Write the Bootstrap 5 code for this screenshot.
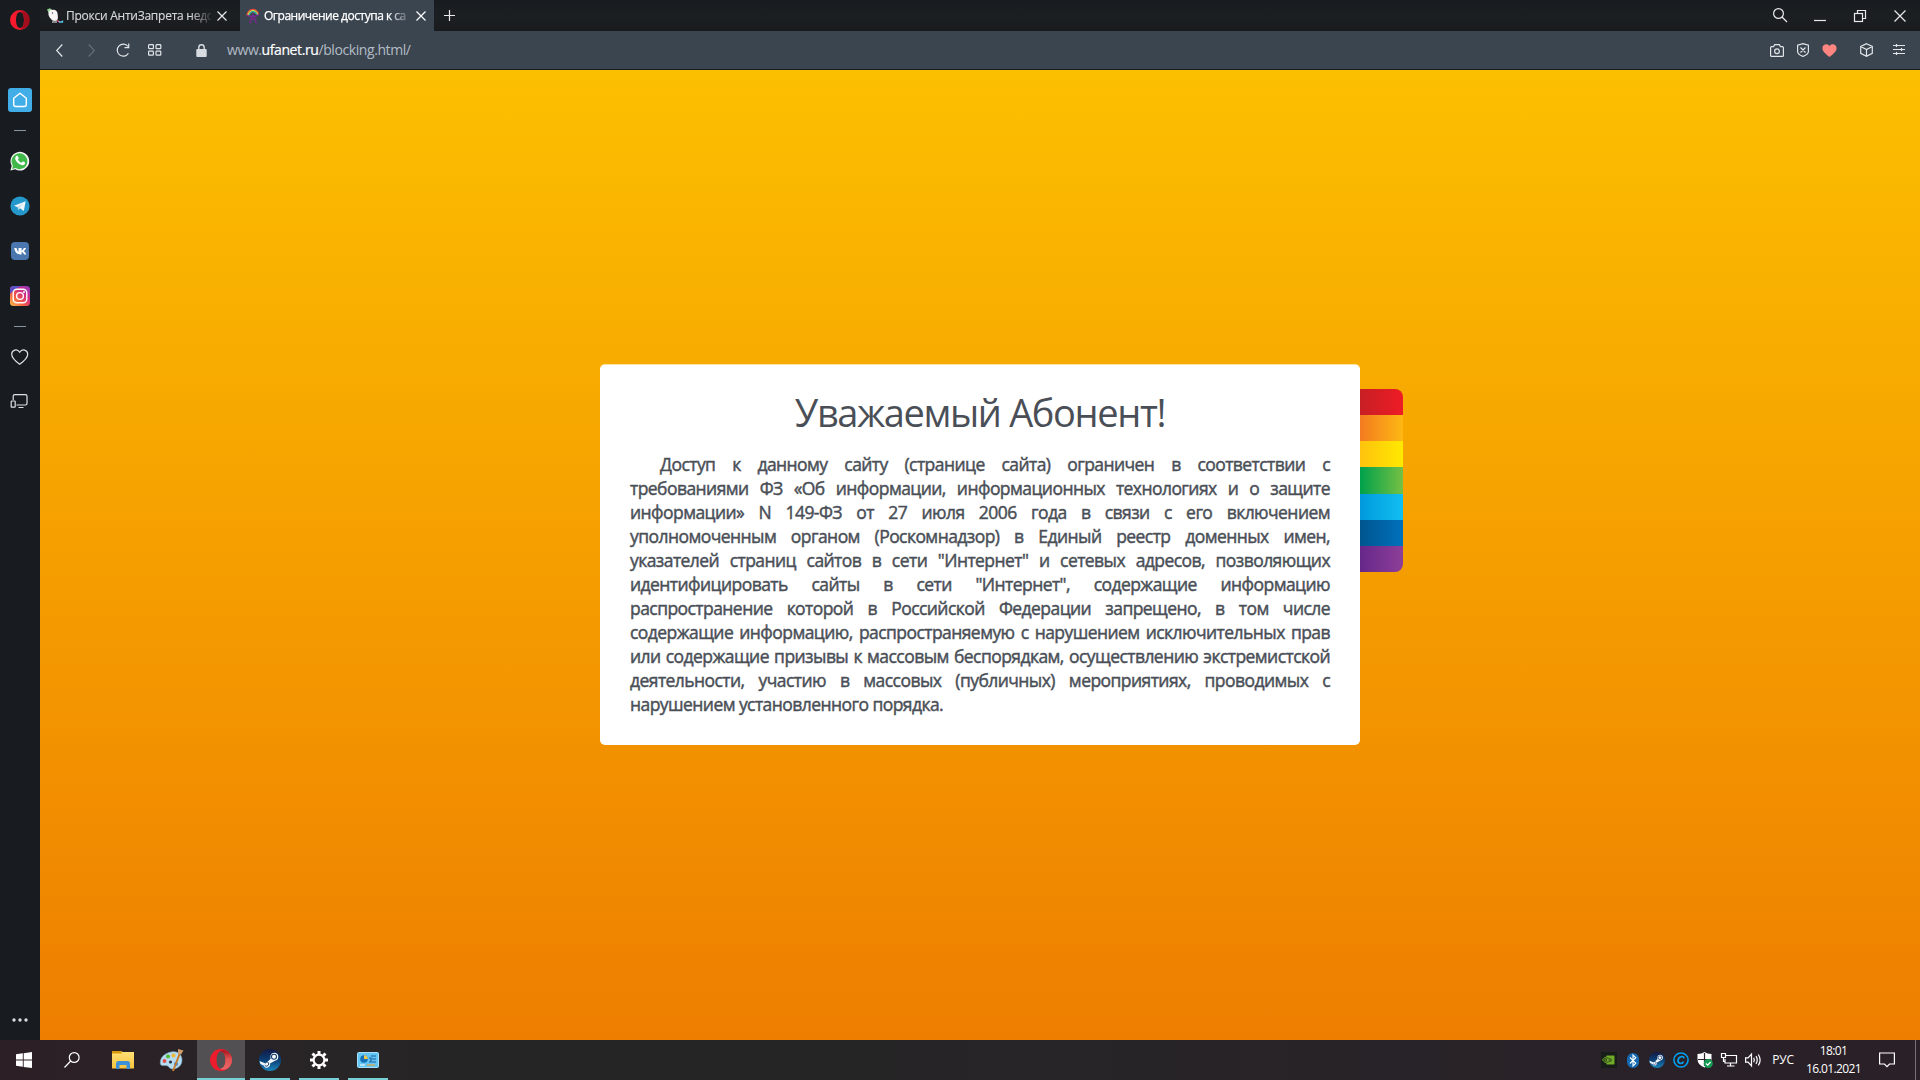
<!DOCTYPE html>
<html lang="ru">
<head>
<meta charset="utf-8">
<title>Ограничение доступа к сайту</title>
<link href="https://cdn.jsdelivr.net/npm/bootstrap@5.3.0/dist/css/bootstrap.min.css" rel="stylesheet">
<style>
body{width:1920px;height:1080px;font-family:"Open Sans","Noto Sans",sans-serif;background:#181c20}
svg{display:block;flex:none;overflow:visible}
.ln{fill:none;stroke:currentColor;stroke-width:1.2}
.rail{width:40px;background:#181c20;color:#dfe3e6}
.rail>div,.slot{display:flex;align-items:center;justify-content:center;flex:none}
.h44{height:44px}.h46{height:46px}.h42{height:42px}.h17{height:17px}.h15{height:15px}.h40{height:40px}
.home-spot{margin-top:38px}
.dash{width:12px;height:1px;background:#8795a3}
.tabs{height:31px;background:linear-gradient(#181c20,#1c1f22 60%,#181a1c);color:#e8eaec;font-size:12px}
.tab-a{width:200px;padding-left:7px}
.tab-b{width:194px;padding-left:6px;background:#3b4550;color:#fff}
.cap{width:145px;line-height:28px;height:28px;white-space:nowrap;-webkit-mask-image:linear-gradient(90deg,#000 86%,transparent 102%);mask-image:linear-gradient(90deg,#000 86%,transparent 102%)}
.cap-a{margin-left:3px;letter-spacing:-.25px;color:#d4d7d9;-webkit-text-stroke:.15px}
.cap-b{margin-left:3px;letter-spacing:-.48px;-webkit-text-stroke:.25px}
.x-a{margin-left:6px}.x-b{margin-left:7px}
.w31{width:31px}.w38{width:38px}.w40{width:40px}.w24{width:24px}.w26{width:26px}.w48{width:48px}
.bar{height:39px;background:#3b4550;border-bottom:1px solid #181c20;color:#e1e5e8}
.url{font-size:14px;color:#b3bcc5;letter-spacing:-.41px;line-height:38px}
.url b{color:#fff;font-weight:400;-webkit-text-stroke:.2px}
.tune{padding-left:3px;margin-right:15px}
.sky{height:970px;background:linear-gradient(#fcbf00,#ee7e00);padding-top:294px}
.notice{width:760px;height:381px;border-radius:5px;padding:22px 30px 0;color:#4a4f57;background:#fff;margin-left:560px;border-top:1px solid #fde3a2}
.notice h1{font-size:38px;line-height:50px;height:65px;margin:0;font-weight:400;letter-spacing:-1.35px;white-space:nowrap}
.txt{font-size:17.5px;line-height:24px;letter-spacing:-.56px;-webkit-text-stroke:.45px}
.txt span{display:block;text-align:justify;text-align-last:justify;white-space:nowrap}
.txt span:first-child{padding-left:30px}
.txt span:last-child{text-align-last:left}
.rainbow{width:43px;height:183px;margin-top:25px;border-radius:0 8px 8px 0;overflow:hidden}
.rainbow i{flex:1}
.r1{background:linear-gradient(90deg,#c71f24,#ee1c25)}.r2{background:linear-gradient(90deg,#f47b20,#fdb813)}.r3{background:linear-gradient(90deg,#ffc20e,#ffe900)}.r4{background:linear-gradient(90deg,#00a14b,#75c044)}.r5{background:linear-gradient(90deg,#0099dc,#11bff2)}.r6{background:linear-gradient(90deg,#00558f,#0071bc)}.r7{background:linear-gradient(90deg,#66278a,#8d3f98)}
.task{height:40px;background:linear-gradient(90deg,#2c1f25,#282527 16%,#252525 28%,#272527 55%,#2a2028);color:#fff}
.apps{gap:1px;margin-left:3px}
.app{width:48px;height:40px}
.app.open{background:linear-gradient(#76d0d6,#76d0d6) 50% 100%/40px 2px no-repeat}
.app.now{background:linear-gradient(#76d0d6,#76d0d6) 50% 100%/48px 2px no-repeat,#535053}
.lang{width:36px;font-size:12px;letter-spacing:-.2px}
.clock{width:65px;font-size:12px;line-height:18px;letter-spacing:-.6px;text-align:center;padding-top:2px}
.w42{width:42px}
.edge{width:5px;margin-left:7px;border-left:1px solid #77717a}
</style>
<script src="https://cdn.jsdelivr.net/npm/bootstrap@5.3.0/dist/js/bootstrap.bundle.min.js"></script>
</head>
<body class="m-0 overflow-hidden d-flex flex-column">
<svg width="0" height="0" class="position-absolute">
<defs>
<linearGradient id="gi" x1="0" y1="1" x2="1" y2="0"><stop offset="0" stop-color="#fdc04f"/><stop offset=".35" stop-color="#f56040"/><stop offset=".65" stop-color="#d12d84"/><stop offset="1" stop-color="#8b3bc0"/></linearGradient>
<linearGradient id="gs" x1="0" y1="0" x2="0" y2="1"><stop offset="0" stop-color="#131a44"/><stop offset=".5" stop-color="#0b3f75"/><stop offset="1" stop-color="#1b86bd"/></linearGradient>
<linearGradient id="gr" x1="0" y1="0" x2="1" y2="0"><stop offset="0" stop-color="#ff1b2d"/><stop offset=".6" stop-color="#e3192b"/><stop offset="1" stop-color="#8d0c19"/></linearGradient>
<linearGradient id="gt" x1="0" y1="0" x2="0" y2="1"><stop offset="0" stop-color="#a3141c"/><stop offset=".45" stop-color="#e05353"/><stop offset="1" stop-color="#e8686a"/></linearGradient>
<linearGradient id="gf" x1="0" y1="0" x2="0" y2="1"><stop offset="0" stop-color="#ffe27a"/><stop offset="1" stop-color="#f8c33c"/></linearGradient>
<symbol id="opera" viewBox="0 0 20 20"><path fill="url(#gr)" fill-rule="evenodd" d="M10 0a10 10 0 1 0 0 20a10 10 0 0 0 0-20zM10 2c2.500 0 4 3.600 4 8s-1.500 8-4 8s-4-3.600-4-8s1.500-8 4-8z"/><path fill="#a20e1d" d="M10 2c3-1.300 5 0 6.500 1.800c2 3.500 2 9 0 12.400C15 18 13 19.300 10 18c2.500 0 4-3.600 4-8s-1.500-8-4-8z"/></symbol>
<symbol id="steam" viewBox="0 0 22 22"><circle cx="11" cy="11" r="11" fill="url(#gs)"/><path d="M.5 12l6 2.600 5-4.600 0-3.500a4 4 0 1 1 4.500 5.200L11 14.600a3.300 3.300 0 0 1-6.300 1.900L1.500 15z" fill="#f4f7fa"/><circle cx="15" cy="7.800" r="2.500" fill="#fff" stroke="#123a6c" stroke-width="1.100"/><path d="M5.700 16.200a2.200 2.200 0 1 0 1.800-3.500" fill="none" stroke="#123a6c"/></symbol>
</defs>
</svg>

<div class="d-flex flex-grow-1">
  <nav class="rail d-flex flex-column flex-shrink-0">
    <div class="h40"><svg width="20" height="20"><use href="#opera"/></svg></div>
    <div class="h44 home-spot"><svg width="24" height="24"><rect width="24" height="24" rx="3" fill="#42aee8"/><path d="M12 5.300L18.300 10.200V16.500a2 2 0 0 1-2 2H7.700a2 2 0 0 1-2-2V10.200z" fill="none" stroke="#fff" stroke-width="1.400" stroke-linejoin="round"/></svg></div>
    <div class="h17"><i class="dash"></i></div>
    <div class="h44"><svg width="20" height="20"><path d="M.4 19.600l1.300-4.800A9.400 9.400 0 1 1 5.200 18.300z" fill="#f3f5f3"/><path d="M2.100 17.900l.9-3.200a7.900 7.900 0 1 1 2.600 2.400z" fill="#41b94a"/><path d="M6.400 5.100c.5-.5 1.300-.4 1.500.1l.8 1.800c.1.500-.3 1-.8 1.500c.8 1.500 1.900 2.500 3.500 3.300l1.200-1.200c.4-.3 2 .6 2.500.9c.2 1.500-1.300 2.900-2.800 2.700C8.600 13.600 5.800 10.600 5.200 7.800c-.1-1 .5-2 1.200-2.700z" fill="#fff"/></svg></div>
    <div class="h46"><svg width="20" height="20"><circle cx="10" cy="10" r="9.600" fill="#2498cb"/><path d="M4 9.800L15.700 5.200 13.800 14.900 9.900 12.300 8.200 14 7.700 11.300z" fill="#eff6fa"/><path d="M7.700 11.300L13.500 7 9.200 11.700 8.200 14z" fill="#b4cfdd"/></svg></div>
    <div class="h44"><svg width="18" height="18"><rect width="18" height="18" rx="4" fill="#4a78ae"/><path d="M3.300 6h2.200C6 8 6.800 9.200 7.500 9.800V6H10.600V8.800C11.600 8.200 12.400 7 12.900 6H15C14.600 7.400 13.700 8.500 12.800 9.200C13.800 9.900 14.800 11 15.300 12.400H13C12.600 11.400 11.700 10.400 10.600 10.100V12.400H9.500C6 12.400 3.700 10 3.300 6z" fill="#fff"/></svg></div>
    <div class="h46"><svg width="20" height="20"><rect width="20" height="20" rx="3.500" fill="url(#gi)"/><path d="M0 8V3.500Q0 0 3.500 0H12Q5 2 0 8z" fill="#5a50c8"/><g fill="none" stroke="#fff" stroke-width="1.400"><rect x="3.200" y="3.200" width="13.600" height="13.600" rx="3.700"/><circle cx="10" cy="10" r="3.400"/></g><circle cx="14" cy="6" r="1" fill="#fff"/></svg></div>
    <div class="h15"><i class="dash"></i></div>
    <div class="h46"><svg width="18" height="16" class="ln"><path d="M8.700 15.300C4.700 12.300.7 9.200.7 5.200C.7 1 6.100-.9 8.700 3.200C11.300-.9 16.700 1 16.700 5.200C16.700 9.200 12.700 12.300 8.700 15.300z"/></svg></div>
    <div class="h42"><svg width="18" height="14" class="ln"><path d="M2.200 6V2.200Q2.200.7 3.700.7H14.500Q16 .7 16 2.200V9.500Q16 11 14.500 11H5.500M7.500 13.500h5"/><rect x=".2" y="7" width="4" height="6.200" rx=".6"/></svg></div>
    <div class="h40 mt-auto"><svg width="16" height="4" fill="#d8dcdf"><circle cx="2" cy="2" r="1.700"/><circle cx="8" cy="2" r="1.700"/><circle cx="14" cy="2" r="1.700"/></svg></div>
  </nav>

  <main class="flex-grow-1">
    <header class="tabs d-flex">
      <div class="tab-a d-flex align-items-center">
        <svg width="16" height="16"><path d="M1 2.500L4 1l1 1c3-1 5.500 1 5.600 4 .1 2 1 4-.6 6.500-2 1-5 .5-6-1.500C2 9 1.200 7 1.500 5z" fill="#f5f5f5"/><path d="M0 1.500L3.500 0 3 3 1 3.500z" fill="#8fd58a"/><circle cx="5.500" cy="5" r=".7" fill="#555"/><path d="M5 14h5" stroke="#eee"/><path d="M10 12.500l3 1.700" stroke="#ee4a83" stroke-width="1.400"/><path d="M12 14h3.500v-1.500" fill="none" stroke="#56c9e8" stroke-width="1.300"/></svg>
        <div class="cap cap-a">Прокси АнтиЗапрета недо</div>
        <svg class="ln x-a" width="10" height="10"><path d="M.5.5l9 9M9.500.5l-9 9"/></svg>
      </div>
      <div class="tab-b d-flex align-items-center">
        <svg width="15" height="16" fill="none"><path d="M1 8C1 4 3.700 1.500 7 1.500S12.500 4 12.500 7" stroke="#e6493d" stroke-width="1.300"/><path d="M2 8C2 5 4 2.700 7 2.700S11.600 5 11.600 7" stroke="#eee83a" stroke-width="1.200"/><path d="M3 8C3 6 5 3.700 7 3.700S10.700 5.500 10.700 7" stroke="#32b5ac" stroke-width="1.200"/><path d="M.8 7.500l4 1h4l4-2M5.500 8.500L4 15.500M8 8.500l2.500 7M5.500 11h3M7 5v4" stroke="#762a8b" stroke-width="1.400"/></svg>
        <div class="cap cap-b">Ограничение доступа к са</div>
        <svg class="ln x-b" width="10" height="10"><path d="M.5.5l9 9M9.500.5l-9 9"/></svg>
      </div>
      <div class="slot w31"><svg class="ln" width="11" height="11"><path d="M5.500 0v11M0 5.500h11"/></svg></div>
      <div class="slot w40 ms-auto"><svg class="ln" width="14" height="15"><circle cx="5.500" cy="5.500" r="4.900"/><path d="M9 9l5 5"/></svg></div>
      <div class="slot w40"><svg class="ln" width="12" height="12"><path d="M0 10.500h12"/></svg></div>
      <div class="slot w40"><svg class="ln" width="12" height="12"><path d="M3.500 3.500V.5h8v8h-3"/><rect x=".5" y="3.500" width="8" height="8"/></svg></div>
      <div class="slot w40"><svg class="ln" width="12" height="12"><path d="M.5.5l11 11M11.500.5l-11 11"/></svg></div>
    </header>

    <div class="bar d-flex align-items-stretch">
      <div class="slot w38"><svg class="ln" width="7" height="13"><path d="M6.300.5L.7 6.500l5.600 6"/></svg></div>
      <div class="slot w26"><svg class="ln opacity-25" width="7" height="13"><path d="M.7.5l5.600 6-5.600 6"/></svg></div>
      <div class="slot w38"><svg class="ln" width="14" height="14"><path d="M12.400 10.200A6 6 0 1 1 12 3.500M12.700.5v4.200H8.500"/></svg></div>
      <div class="slot w26"><svg class="ln" width="14" height="12"><rect x=".6" y=".6" width="4.800" height="4" rx=".7"/><rect x="8" y=".6" width="4.800" height="4" rx=".7"/><rect x=".6" y="7.200" width="4.800" height="4" rx=".7"/><rect x="8" y="7.200" width="4.800" height="4" rx=".7"/></svg></div>
      <div class="slot ms-4 ps-1"><svg width="11" height="13"><path d="M2.800 6V3.500a2.700 2.700 0 0 1 5.400 0V6" fill="none" stroke="#d8dce0" stroke-width="1.400"/><rect x=".3" y="5" width="10.400" height="8" rx="1" fill="#d8dce0"/></svg></div>
      <div class="url ms-3 ps-1">www.<b>ufanet.ru</b>/blocking.html/</div>
      <div class="slot w26 ms-auto"><svg class="ln" width="14" height="13"><path d="M.6 3.700Q.6 2.700 1.600 2.700H3.500L4.700.7H9.300L10.500 2.700H12.400Q13.400 2.700 13.400 3.700V11.400Q13.400 12.400 12.400 12.400H1.600Q.6 12.400.6 11.400z"/><circle cx="7" cy="7.300" r="2.400"/></svg></div>
      <div class="slot w26"><svg class="ln" width="12" height="14"><path d="M6 .6L11.400 2.200V8.500Q11.400 11.500 6 13.400Q.6 11.500.6 8.500V2.200zM3.500 4.500l5 5M8.500 4.500l-5 5"/></svg></div>
      <div class="slot w26"><svg width="15" height="13"><path d="M7.500 13C4 10 .4 7.700.4 4.200C.4.200 5.400-1 7.500 2C9.600-1 14.600.200 14.600 4.200C14.600 7.700 11 10 7.500 13z" fill="#ff8580"/></svg></div>
      <div class="slot w48"><svg class="ln" width="13" height="14"><path d="M6.500.7l5.800 2.800v6.800l-5.800 3-5.800-3V3.500zM.7 3.500l5.800 3 5.800-3M6.500 6.500v6.800"/></svg></div>
      <div class="slot tune"><svg class="ln" width="12" height="12"><path d="M0 1.500h12M0 5.500h12M0 9.500h12M3.500 0v3M8.500 4v3M3.500 8v3"/></svg></div>
    </div>

    <section class="sky d-flex align-items-start">
      <article class="notice">
        <h1 class="text-center">Уважаемый Абонент!</h1>
        <div class="txt">
          <span>Доступ к данному сайту (странице сайта) ограничен в соответствии с</span>
          <span>требованиями ФЗ «Об информации, информационных технологиях и о защите</span>
          <span>информации» N 149-ФЗ от 27 июля 2006 года в связи с его включением</span>
          <span>уполномоченным органом (Роскомнадзор) в Единый реестр доменных имен,</span>
          <span>указателей страниц сайтов в сети "Интернет" и сетевых адресов, позволяющих</span>
          <span>идентифицировать сайты в сети "Интернет", содержащие информацию</span>
          <span>распространение которой в Российской Федерации запрещено, в том числе</span>
          <span>содержащие информацию, распространяемую с нарушением исключительных прав</span>
          <span>или содержащие призывы к массовым беспорядкам, осуществлению экстремистской</span>
          <span>деятельности, участию в массовых (публичных) мероприятиях, проводимых с</span>
          <span>нарушением установленного порядка.</span>
        </div>
      </article>
      <div class="rainbow d-flex flex-column"><i class="r1"></i><i class="r2"></i><i class="r3"></i><i class="r4"></i><i class="r5"></i><i class="r6"></i><i class="r7"></i></div>
    </section>
  </main>
</div>

<footer class="task d-flex flex-shrink-0">
  <div class="slot w48"><svg width="16" height="16" fill="#fff"><path d="M0 2.300L6.800 1.300V7.600H0zM7.700 1.200L16 0V7.600H7.700zM0 8.500H6.800V14.800L0 13.800zM7.700 8.500H16V16L7.700 14.900z"/></svg></div>
  <div class="slot w48"><svg class="ln" width="16" height="16"><circle cx="10.200" cy="5.500" r="4.900"/><path d="M6.700 9L.5 15.500"/></svg></div>
  <div class="apps d-flex">
    <div class="app slot"><svg width="22" height="18"><path d="M0 0h9l1.500 1H22v16.500H0z" fill="url(#gf)"/><path d="M0 0h9l1 2.500H0z" fill="#d79a0c"/><path d="M4 18v-5.500q0-2.500 2.500-2.500h9q2.500 0 2.500 2.500V18h-3.500v-4h-7v4z" fill="#3b92d8"/></svg></div>
    <div class="app slot"><svg width="24" height="23"><path d="M11 3C17 1.500 22 5 22 11s-5 9-9.500 9C9 20 9 16.500 6 16.500S0 17.500.3 13C.6 8 5 4.300 11 3z" fill="#b5dcf0" stroke="#79acc9" stroke-width=".6"/><circle cx="8" cy="7.500" r="2.100" fill="#56b83e"/><circle cx="13.500" cy="6.500" r="2.100" fill="#efb83a"/><circle cx="4.500" cy="12" r="1.900" fill="#e34b4b"/><circle cx="10.500" cy="13" r="1.600" fill="#26333e"/><circle cx="16" cy="15" r="2" fill="#3784d2"/><path d="M20 4L13 22" stroke="#c67a2b" stroke-width="2"/><path d="M18 0l5.500 1.500-2.500 4-3-1.200z" fill="#cf9d6b"/></svg></div>
    <div class="app open now slot"><svg width="22" height="22" viewBox="0 0 20 20"><path fill="#ec1c2c" fill-rule="evenodd" d="M10 0a10 10 0 1 0 0 20a10 10 0 0 0 0-20zM10 2c2.500 0 4 3.600 4 8s-1.500 8-4 8s-4-3.600-4-8s1.500-8 4-8z"/><path fill="url(#gt)" d="M9 2C13-.5 20 3 20 10S13 20.500 9 18c3 0 5-3.600 5-8s-2-8-5-8z"/></svg></div>
    <div class="app open slot"><svg width="22" height="22"><use href="#steam"/></svg></div>
    <div class="app open slot"><svg width="20" height="20" viewBox="-10 -10 20 20" fill="none" stroke="#fff"><circle r="5.400" stroke-width="2.200"/><path stroke-width="3" d="M0-6v-3M0 6v3M6 0h3M-6 0h-3M4.300-4.300l2.200-2.200M-4.300 4.300l-2.200 2.200M4.300 4.300l2.200 2.200M-4.300-4.300l-2.200-2.200"/></svg></div>
    <div class="app open slot"><svg width="22" height="16"><rect x=".5" y=".5" width="21" height="15" rx="1" fill="#64c5f3" stroke="#a8e0fb"/><circle cx="7" cy="7" r="3.800" fill="#1670b5"/><path d="M7 7V3.200A3.800 3.800 0 0 1 10.800 7z" fill="#f1c84a"/><path d="M12 6h2v4h-2M14 4h5M15 7h4M15 10h4" stroke="#155f9c" stroke-width="1.200" fill="none"/><path d="M3 13h5" stroke="#fff"/><path d="M10 13h8" stroke="#e2a33a" stroke-width="1.200"/></svg></div>
  </div>
  <div class="d-flex ms-auto">
    <div class="slot w24"><svg width="16" height="16"><rect width="16" height="16" fill="#171d19"/><path d="M5.500 3.500h8v9h-8z" fill="#6faa28"/><path d="M1.500 7.800C4 3.800 9 4 11.500 8C9 11.800 4 12 1.500 7.800zM3.700 7.800C5.500 5.400 8 5.700 9.500 8C7.500 10 5.300 10 3.700 7.800z" fill="#263e18" stroke="#7fba2c" stroke-width=".8"/><circle cx="6.800" cy="7.900" r="1" fill="#8bc435"/></svg></div>
    <div class="slot w24"><svg width="12" height="15"><rect width="12" height="15" rx="5.800" fill="#1768b1"/><path d="M3 4.500l5.800 5.800L6 13V2l2.800 2.700L3 10.500" fill="none" stroke="#fff" stroke-width="1.100"/></svg></div>
    <div class="slot w24"><svg width="16" height="16"><use href="#steam"/></svg></div>
    <div class="slot w24"><svg width="16" height="16" fill="none" stroke="#00a3f5"><circle cx="8" cy="8" r="7.100" stroke-width="1.500"/><path d="M11 6.300C10.500 3.500 5.500 4.200 5 8.300C4.700 12 9.300 12.500 10.500 9.700" stroke-width="1.700"/></svg></div>
    <div class="slot w24"><svg width="16" height="16"><path d="M7.500 0Q10 2 14.500 2v5q0 6-7 8.500Q.5 13 .5 7V2Q5 2 7.500 0z" fill="#fff"/><path d="M7.500 1v13M1 7.500h13" stroke="#29252a" stroke-width="1.200"/><circle cx="11.300" cy="11.500" r="4.500" fill="#169b55"/><path d="M9 11.500l1.700 1.700L13.600 10" fill="none" stroke="#fff" stroke-width="1.200"/></svg></div>
    <div class="slot w24"><svg class="ln" width="16" height="14"><path d="M5 2.500h10.500v7.500H4V6M9.500 10v3M6 13h7.500"/><path d="M.5.500h4v4h-4zM2.500 5v3.500H4"/></svg></div>
    <div class="slot w24"><svg class="ln" width="16" height="14"><path d="M.6 4.800h2.500L6.500 1v12L3.100 9.200H.6zM8.700 4.800q1.300 2.200 0 4.400M11 3.200q2.500 3.800 0 7.600M13.300 1.500q3.700 5.500 0 11"/></svg></div>
    <div class="slot lang">РУС</div>
    <div class="clock">18:01<br>16.01.2021</div>
    <div class="slot w42"><svg class="ln" width="16" height="16"><path d="M.6 1h14.800v11H10.500L8 14.700 5.500 12H.6z"/></svg></div>
    <div class="edge"></div>
  </div>
</footer>
</body>
</html>
